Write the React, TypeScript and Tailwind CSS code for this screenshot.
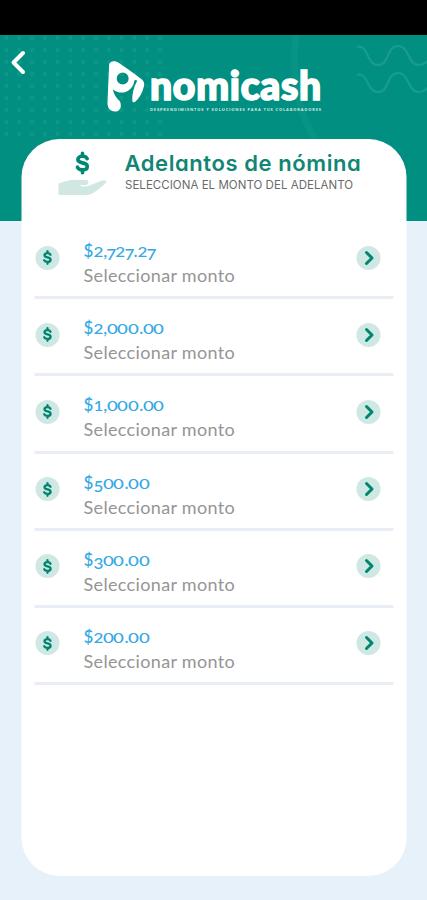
import React from 'react';

const amounts = ['$2,727.27', '$2,000.00', '$1,000.00', '$500.00', '$300.00', '$200.00'];

function Digit({ c }: { c: string }) {
  if (c === '0') {
    return <span className="mr-[0.8px] inline-block origin-[50%_78%] scale-x-[1.1] scale-y-[0.77]">{c}</span>;
  }
  if ('12'.includes(c)) {
    return <span className="inline-block origin-[50%_78%] scale-y-[0.77]">{c}</span>;
  }
  if (c === '7') {
    return <span className="-mr-[0.9px] -ml-[0.8px] inline-block translate-y-[3px] scale-y-[0.95]">{c}</span>;
  }
  if ('345'.includes(c)) {
    return <span className="inline-block translate-y-[3px] scale-y-[0.95]">{c}</span>;
  }
  return <span>{c}</span>;
}

function Dollar({ className }: { className: string }) {
  return (
    <svg viewBox="0 0 12 20" className={className} fill="none" stroke="currentColor" strokeWidth="3.1" strokeLinecap="round" strokeLinejoin="round">
      <path d="M10 6.3C9.3 4.8 7.8 4.2 6 4.2 3.6 4.2 2 5.3 2 7c0 1.9 1.8 2.4 4 2.9 2.300.5 4.100 1.200 4.100 3.100 0 1.800-1.700 2.900-4.100 2.900-2.100 0-3.600-.7-4.400-2.300M6 1.600v2.400M6 16v2.400" />
    </svg>
  );
}

function Pattern() {
  return (
    <svg className="absolute inset-0 h-full w-full" viewBox="0 0 427 186" fill="none">
      <defs>
        <pattern id="dots" width="12.800" height="12" patternUnits="userSpaceOnUse" x="0" y="-3">
          <circle cx="6.400" cy="6" r="2.200" fill="#1ca18e" />
        </pattern>
      </defs>
      <rect width="165" height="104" fill="url(#dots)" opacity=".45" />
      <path d="M296 0C291 40 298 77 315 104" stroke="#10998a" strokeWidth="7" opacity=".5" />
      <path d="M357 12C369 9 366 30 378 30S386 11 398 11s9 19 21 19c4 0 7-2 10-5M357 40c12-3 9 17 21 17s8-19 20-19 9 19 21 19c4 0 7-2 10-5" stroke="#1d9f8f" strokeWidth="2.200" opacity=".85" />
    </svg>
  );
}

function Brand() {
  return (
    <div className="absolute left-[106px] top-[25px] flex text-white">
      <svg viewBox="318 120 120 160" className="h-[53px] w-10" fill="currentColor">
        <path fillRule="evenodd" d="M327 134Q330 121 346 124Q355 126 425 178Q436 187 432 200Q425 230 405 247Q397 250 397 242Q396 212 411 184Q411 178 404 181Q398 212 372 218Q352 220 338 208Q342 228 360 245Q367 262 355 273Q345 279 332 272Q322 265 322 250ZM350 176a18 18 0 1 0 36 0a18 18 0 1 0-36 0Z" />
      </svg>
      <div className="ml-1 flex flex-col pt-[5px]">
        <span className="h-[40px] whitespace-nowrap font-['Lato','Open_Sans',sans-serif] text-[39px] leading-[40px] font-black tracking-[0.75px] [-webkit-text-stroke:1.7px_white]">nomicash</span>
        <span className="mt-[1.500px] whitespace-nowrap font-['Open_Sans',sans-serif] text-[4px] leading-[5px] font-bold tracking-[0.86px] opacity-80">DESPRENDIMIENTOS Y SOLUCIONES PARA TUS COLABORADORES</span>
      </div>
    </div>
  );
}

export default function App() {
  return (
    <main className="flex h-[900px] w-full flex-col overflow-hidden bg-[#e7f1fa] font-['Inter',sans-serif]">
      <div className="h-[35px] shrink-0 bg-black" />
      <header className="relative h-[186px] shrink-0 bg-[#008f80]">
        <Pattern />
        <svg viewBox="0 0 16 26" className="absolute left-[10px] top-[15px] h-[26px] w-4 text-white" fill="none" stroke="currentColor" strokeWidth="4" strokeLinecap="round" strokeLinejoin="round">
          <path d="M13 3 3.500 12.500 13 22" />
        </svg>
        <Brand />
      </header>
      <section className="relative mx-auto -mt-[82px] flex h-[737px] w-[385px] shrink-0 translate-x-[0.5px] flex-col rounded-[38px] bg-white">
        <div className="flex h-[83px] shrink-0 pl-[36px]">
          <div className="flex w-[50px] flex-col items-center pt-3">
            <Dollar className="h-6 w-[14px] text-[#008873]" />
            <svg viewBox="0 0 50 18" className="mt-[3px] h-[18px] w-[50px]">
              <path d="M1 5.500 9 3Q16 1 22 2h7q4 2 0 5h-8q6 3 12 0L42 3.500q5-2 7 0-1 2-6 6Q36 16 30 17H1Z" fill="#d0e7e2" />
            </svg>
          </div>
          <div className="ml-[17px] flex flex-col pt-[10px]">
            <h1 className="whitespace-nowrap text-[22px] leading-[29px] font-semibold tracking-[0.58px] text-[#118675] [font-feature-settings:'cv11']">Adelantos de nómina</h1>
            <p className="ml-[0.5px] whitespace-nowrap text-[11.500px] leading-[15px] tracking-[0.04px] text-[#6a6a6a]">SELECCIONA EL MONTO DEL ADELANTO</p>
          </div>
        </div>
        <ul className="ml-[13px] w-[359px]">
          {amounts.map((a) => (
            <li key={a} className="flex h-[77.200px] border-b-[3px] border-[#e9edf5]">
              <span className="ml-px mt-[23.500px] flex size-[24px] items-center justify-center rounded-full bg-[#d0e8e3] text-[#008570]">
                <Dollar className="h-[15px] w-[10px]" />
              </span>
              <div className="ml-6 flex flex-1 flex-col pt-[17px]">
                <span className="whitespace-nowrap font-['Lato',sans-serif] text-[17px] leading-[24px] font-medium text-[#35a9e5]">
                  {a.split('').map((c, i) => <Digit key={i} c={c} />)}
                </span>
                <span className="whitespace-nowrap font-['Lato',sans-serif] text-[18px] leading-[24px] tracking-[0.34px] text-[#959595]">Seleccionar monto</span>
              </div>
              <span className="mr-[13px] mt-[23.500px] flex size-[24px] items-center justify-center rounded-full bg-[#d0e8e3]">
                <svg viewBox="0 0 10 16" className="ml-0.5 h-4 w-[10px]" fill="none" stroke="#008570" strokeWidth="3" strokeLinecap="round" strokeLinejoin="round"><path d="m2 2.500 5.500 5.500L2 13.500" /></svg>
              </span>
            </li>
          ))}
        </ul>
      </section>
    </main>
  );
}
